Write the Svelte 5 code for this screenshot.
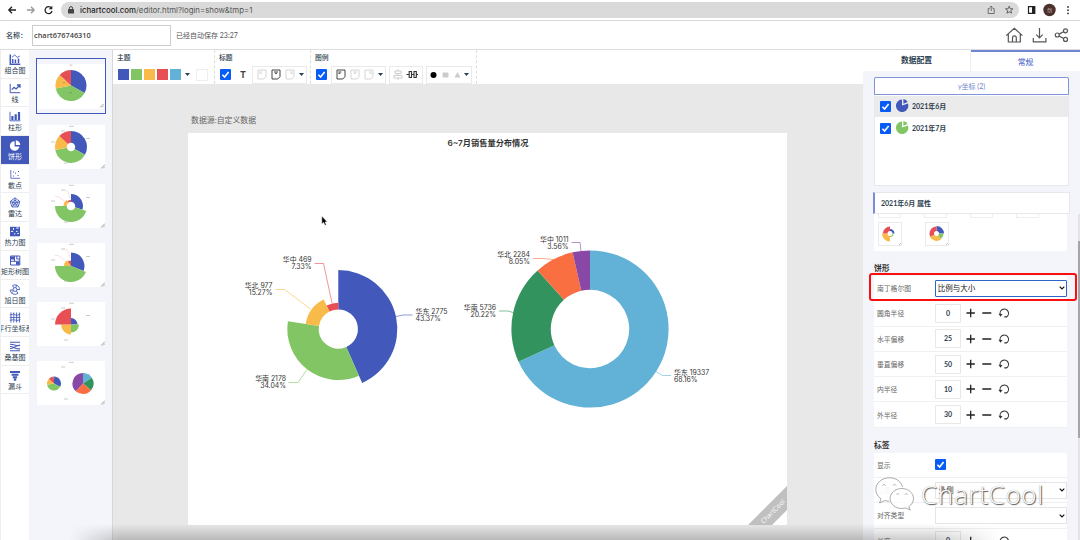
<script>
	const blue = '#4259bb'
	const green = '#82c564'
	const yellow = '#f8bb49'
	const red = '#e84f54'
	const cyan = '#62b1d6'
	const teal = '#32935e'
	const orange = '#fa6f42'
	const purple = '#8948a6'
	const colors = [blue, green, yellow, red]

	const menu = [
		{ icon: 'mix', label: '组合图' },
		{ icon: 'line', label: '线' },
		{ icon: 'bar', label: '柱形' },
		{ icon: 'pie', label: '饼形' },
		{ icon: 'scatter', label: '散点' },
		{ icon: 'radar', label: '雷达' },
		{ icon: 'heat', label: '热力图' },
		{ icon: 'tree', label: '矩形树图' },
		{ icon: 'sun', label: '旭日图' },
		{ icon: 'parallel', label: '平行坐标系' },
		{ icon: 'sankey', label: '桑基图' },
		{ icon: 'funnel', label: '漏斗' }
	]

	function slices(cx, cy, inner, radii, parts, fills) {
		const total = parts.reduce((a, b) => a + b, 0)
		let from = 0
		return parts.map((p, i) => {
			const to = from + (p / total) * Math.PI * 2
			const r = Array.isArray(radii) ? radii[i] : radii
			const at = (radius, a) => `${(cx + radius * Math.sin(a)).toFixed(2)} ${(cy - radius * Math.cos(a)).toFixed(2)}`
			const big = to - from > Math.PI ? 1 : 0
			const d = `M${at(inner, from)}L${at(r, from)}A${r} ${r} 0 ${big} 1 ${at(r, to)}L${at(inner, to)}A${inner} ${inner} 0 ${big} 0 ${at(inner, from)}Z`
			from = to
			return { d, fill: fills[i] }
		})
	}

	const june = slices(338.3, 329, 19.6, [59, 51, 33, 26.3], [43.37, 34.04, 15.27, 7.33], colors)
	const july = slices(590, 329, 39.2, 78.6, [68.16, 20.22, 8.05, 3.56], [cyan, teal, orange, purple])

	const labels = [
		{ name: '华东 2775', pct: '43.37%', x: 415.5, y: 314, color: blue, line: '396,316.5 403,315 412.5,315' },
		{ name: '华南 2178', pct: '34.04%', x: 286, y: 381, end: true, color: green, line: '307,369.5 298,382.5 288.5,382.5' },
		{ name: '华北 977', pct: '15.27%', x: 272.5, y: 288, end: true, color: yellow, line: '310.5,309 284.5,289.5 275.5,289.5' },
		{ name: '华中 469', pct: '7.33%', x: 311.5, y: 262, end: true, color: red, line: '332,303 323.5,263.5 314.5,263.5' },
		{ name: '华东 19337', pct: '68.16%', x: 674, y: 375, color: cyan, line: '656,371.5 662.5,375.5 671,375.5' },
		{ name: '华南 5736', pct: '20.22%', x: 496, y: 310, end: true, color: teal, line: '513,312.5 508,311 499,311' },
		{ name: '华北 2284', pct: '8.05%', x: 530, y: 257, end: true, color: orange, line: '554,259.5 542,258.5 533,258.5' },
		{ name: '华中 1011', pct: '3.56%', x: 568.5, y: 241.5, end: true, color: purple, line: '581,251 580,242.5 571.5,242.5' }
	]

	const parts = [33, 39, 15, 13]
	const thumbs = [
		slices(35, 27, 0, 16, parts, colors),
		slices(34, 22, 4.2, 16, parts, colors),
		slices(34, 22, 4.2, [12, 16, 7.5, 6], [30, 45, 15, 10], colors),
		slices(34, 23, 0, [13.5, 16, 7, 5.5], [31, 44, 15, 10], colors),
		slices(34, 22.5, 0, [6.5, 8, 10, 16], [25, 25, 25, 25], colors),
		[
			...slices(17, 22.5, 0, 7, parts, colors),
			...slices(46, 22.5, 0, 10.5, [16, 20, 26, 38], [cyan, teal, orange, purple])
		]
	]

	const mini = [
		slices(12, 11.5, 2.5, [4.5, 3.5, 8, 7], [25, 25, 25, 25], [blue, green, yellow, red]),
		slices(11.5, 11.5, 2.5, [7.5, 7, 7.5, 7], [25, 14, 28, 33], [blue, green, yellow, red])
	]

	let steps = [
		{ label: '圆角半径', value: 0 },
		{ label: '水平偏移', value: 25 },
		{ label: '垂直偏移', value: 50 },
		{ label: '内半径', value: 10 },
		{ label: '外半径', value: 30 }
	]
</script>

{#snippet check()}
	<svg class="check" viewBox="0 0 11 11"><rect width="11" height="11" rx="1" fill="#075cf5" /><path d="M2.4 5.7l2.2 2.3L8.6 3" fill="none" stroke="#fff" stroke-width="1.6" /></svg>
{/snippet}

{#snippet caret()}
	<svg class="caret" viewBox="0 0 5 3"><path d="M0 0h5L2.5 3z" fill="#2c3e50" /></svg>
{/snippet}

{#snippet page(side, on)}
	<svg class="page" viewBox="0 0 10 11" class:on>
		<path d="M1 1h8v6.700L6.800 10H1z" />
		<path d={side === 'left' ? 'M2.4 3h3M2.4 4.4h2' : side === 'mid' ? 'M3 3h4M4 4.4h2' : 'M4.8 3h3M5.8 4.4h2'} />
	</svg>
{/snippet}

{#snippet chevron()}
	<svg class="chevron" viewBox="0 0 6 4"><path d="M.7.7L3 3 5.3.7" fill="none" stroke="#111" stroke-width="1.2" /></svg>
{/snippet}

{#snippet stepper(s)}
	<div class="row">
		<span class="key">{s.label}</span>
		<span class="num">{s.value}</span>
		<svg class="ops" viewBox="0 0 44 12">
			<path d="M4.7 1.8v8.4M.5 6h8.4M16.3 6h9" stroke="#222" stroke-width="1.3" />
			<path d="M34.6 8.2A4.2 4.2 0 1 1 40.4 9.9H38.3" fill="none" stroke="#333" stroke-width="1.1" />
			<path d="M32.5 6.8l4 .2-2 2.8z" fill="#333" />
		</svg>
	</div>
{/snippet}

<div class="app">
	<div class="browser">
		<svg class="nav" viewBox="0 0 61 20">
			<g fill="none" stroke-width="1.3">
				<path d="M16 10H9M12 6.7L8.8 10l3.2 3.3" stroke="#222" />
				<path d="M27 10h7M31 6.7l3.2 3.3-3.2 3.3" stroke="#999" />
				<path d="M51.4 8A3.5 3.5 0 1 0 52 11" stroke="#222" />
			</g>
			<path d="M52.3 5.7v3.6h-3.6z" fill="#222" />
		</svg>
		<div class="url">
			<svg class="lock" viewBox="0 0 6 8"><rect y="3" width="6" height="4.6" rx=".6" fill="#444" /><path d="M1.4 3.4V2.2a1.6 1.6 0 0 1 3.2 0v1.2" fill="none" stroke="#444" /></svg>
			<span><b>ichartcool.com</b>/editor.html?login=show&amp;tmp=1</span>
			<svg class="urlicons" viewBox="0 0 28 10">
				<path d="M3.8 3.6H2.2v4.9h6V3.6H6.6M5.2 6V1.2M3.7 2.6l1.5-1.5 1.5 1.5" fill="none" stroke="#555" stroke-width=".8" />
				<path d="M23.2 1.2l1 2.5 2.7.2-2.1 1.7.7 2.6-2.3-1.4L20.9 8.2l.7-2.6-2.1-1.7 2.7-.2z" fill="none" stroke="#444" stroke-width=".8" />
			</svg>
		</div>
		<svg class="tools" viewBox="0 0 61 20">
			<path d="M9.5 6.7h6.3v6.6H9.5z" fill="none" stroke="#222" stroke-width="1.2" /><path d="M13 6.5h3v7h-3z" fill="#222" />
			<circle cx="30.5" cy="10" r="6.2" fill="#4c302c" />
			<text x="30.5" y="12" text-anchor="middle" font-size="5" fill="#cbb">剑</text>
			<g fill="#333"><circle cx="49" cy="7" r=".9" /><circle cx="49" cy="10.2" r=".9" /><circle cx="49" cy="13.4" r=".9" /></g>
		</svg>
	</div>

	<header>
		<span class="title">名称：</span>
		<div class="name">chart676746310</div>
		<span class="saved">已经自动保存 23:27</span>
		<svg class="actions" viewBox="0 0 66 18" fill="none" stroke="#555" stroke-width="1.2">
			<path d="M2.200 9.600L10.300 2.200l8.100 7.400M4.300 8v8h12V8M8.500 16v-4.200a1.900 1.900 0 0 1 3.800 0V16" />
			<path d="M35.500 2v9.800M32.300 8.700l3.200 3.200 3.200-3.200M29.300 12v3.800h12.600V12" />
			<circle cx="53.300" cy="9" r="2" /><circle cx="61.500" cy="4.800" r="2" /><circle cx="61.500" cy="13.400" r="2" /><path d="M55.100 8.100l4.500-2.300M55.100 9.900l4.500 2.500" />
		</svg>
	</header>

	<main>
		<nav>
			{#each menu as m}
				<div class="item" class:active={m.icon === 'pie'}>
					<svg viewBox="0 0 12 11" fill="none" stroke="currentColor">
						{#if m.icon === 'mix'}
							<path d="M1.3.5v9.7h10M3.7 9V5M6.4 9V5.500M9.500 9V4.500" stroke-width="1.500" /><path d="M3 3.200L5.700 1l2.500 2.400L10.800 2" stroke-width=".9" />
						{:else if m.icon === 'line'}
							<path d="M1.2.8v8.9h10" /><path d="M2.8 6.6l2.300-2.300 2 1.600 3.400-3.400M8 2h3v2.800" stroke-width="1.300" />
						{:else if m.icon === 'bar'}
							<path d="M1 .8v9h10.400" stroke-width=".9" /><path d="M3.400 9V5M6.700 9V3.200M10 9V1" stroke-width="2.200" />
						{:else if m.icon === 'pie'}
							<path d="M5.600 1.200a4.800 4.800 0 1 0 4.800 5.200H5.600z" fill="currentColor" stroke="none" /><path d="M6.800.3a4.500 4.500 0 0 1 4.400 4.700H6.800z" fill="currentColor" stroke="none" />
						{:else if m.icon === 'scatter'}
							<path d="M1.800 1v8.300H11" stroke-width=".8" /><path d="M4 7h1M6 4.200h1M8.500 6.500h1M9 2.500h1M4 3h1" />
						{:else if m.icon === 'radar'}
							<path d="M6 .8l4.800 3.700L9 9.900H3L1.200 4.500zM6 3l2.800 2.200L7.800 8H4.200l-1-2.800zM6 1v5M1.200 4.500L6 6l4.800-1.500M3 10l3-4 3 4" stroke-width=".9" />
						{:else if m.icon === 'heat'}
							<path d="M1 .8h10v9.500H1z" fill="currentColor" stroke="none" /><path d="M4.500 2v1.800M7.300 2h2.500M2 5.400h2.200M7 5.400h1.500M5 7.800h1.300M8.300 7.500h1.600" stroke="#fff" />
						{:else if m.icon === 'tree'}
							<path d="M1.500 1h9.300v9H1.500zM5.500 1v5.300M1.500 6.300h9.300M7.800 1v3h3" /><path d="M2 1.500h3v3H2zM7 7h3.500v2.800H7z" fill="currentColor" stroke="none" />
						{:else if m.icon === 'sun'}
							<circle cx="6" cy="5.500" r="1.900" stroke-width=".9" /><path d="M1.200 6A4.700 4.700 0 0 0 9 9.200L7.400 7M1.200 6h2.900M3.600 1.500L5 3.800M3.600 1.500a4.700 4.700 0 0 1 7 4M10.700 5.500H8M2.600 8.800l2-1.800M7.500 1l-.6 2.700" stroke-width=".9" />
						{:else if m.icon === 'parallel'}
							<path d="M2 .5v10M4.800.5v10M7.600.5v10M10.400.5v10" stroke-width=".9" /><path d="M.8 3l3.500-1 3.500 1.500L11.400 2M.8 5.500h10.600M.8 8.300l4-.6 3 .8 3.600-.8" stroke-width=".8" />
						{:else if m.icon === 'sankey'}
							<path d="M1 1.300h10M1 3.300c5 0 5 2 10 1.200M1 9.700h10M1 7.800c5-.5 5-3.300 10-3.800M1 5.500c4 0 5 2.600 10 2.400" stroke-width="1.100" />
						{:else}
							<path d="M1 2h10M2.600 4.800h6.800M3.800 7.200h4.400M4.800 9.600h2.400" stroke-width="2.100" />
						{/if}
					</svg>
					<span>{m.label}</span>
				</div>
			{/each}
		</nav>

		<aside class="thumbs">
			{#each thumbs as t, i}
				<div class="thumb" class:selected={i === 0}>
					<svg viewBox={i === 0 ? '0 0 70 55' : '0 0 68 44'}>
						{#each t as s}<path d={s.d} fill={s.fill} />{/each}
						{#if i === 0}
							<path d="M33.5 6h3M40 22.500h3M33 34.500h3M26.500 24h2.500M30 18.500h2" stroke="#555" stroke-opacity=".5" stroke-width=".7" />
							<path d="M65 49.500l3.500-3.500M67 49.500l1.500-1.500" stroke="#888" stroke-width=".8" />
						{:else}
							<path d="M32 1.300h5M49 13.500h4M14 17h4M27 38h4M24 6h4" stroke="#aaa" stroke-width=".6" />
							<path d="M64 43.500l4-4M66 43.500l2-2" stroke="#888" stroke-width=".8" />
							{#if i === 2 || i === 3}<path d="M28 6.500l3 1.500 2 7M18 12.500h3l7 5" fill="none" stroke="#f3b5ae" stroke-width=".4" />{/if}
						{/if}
					</svg>
				</div>
			{/each}
		</aside>

		<section class="work">
			<div class="toolbar">
				<div class="group theme">
					<h4>主题</h4>
					<div class="controls">
						{#each [...colors, cyan] as c}<i class="swatch" style="background: {c}"></i>{/each}
						{@render caret()}
						<i class="blank"></i>
					</div>
				</div>
				<div class="group heading">
					<h4>标题</h4>
					<div class="controls">
						{@render check()}
						<b class="tee">T</b>
						<div class="box wide">{@render page('left')}{@render page('mid', true)}{@render page('right')}{@render caret()}</div>
					</div>
				</div>
				<div class="group legend">
					<h4>图例</h4>
					<div class="controls">
						{@render check()}
						<div class="box wide lead">{@render page('left', true)}{@render page('mid')}{@render page('right')}{@render caret()}</div>
						<div class="box">
							<svg class="align" viewBox="0 0 26 11" fill="none">
								<path d="M5 0v2M5 4.500v2M5 9v2M2 2h6v2.500H2zM1 6.500h8V9H1z" stroke="#ccc" />
								<path d="M13.500 5.500h2.500M19 5.500h2M23.500 5.500h1.500M16.200 2.500h2.300v6h-2.300zM21 2.500h2.300v6H21z" stroke="#333" stroke-width="1.100" />
							</svg>
						</div>
						<div class="box shapes">
							<svg class="marks" viewBox="0 0 30 8"><circle cx="3.500" cy="4" r="3" fill="#000" /><rect x="12.500" y="1.500" width="6" height="5" rx="1" fill="#ccc" /><path d="M27.500 1l3 5.500h-6z" fill="#ccc" /></svg>
							{@render caret()}
						</div>
					</div>
				</div>
			</div>
			<p class="source">数据源:自定义数据</p>
			<div class="canvas">
				<svg viewBox="188 133 599 392">
					<text class="chart-title" x="488" y="145.800" text-anchor="middle" textLength="81">6~7月销售量分布情况</text>
					{#each [...june, ...july] as s}<path d={s.d} fill={s.fill} />{/each}
					{#each labels as l}
						<polyline points={l.line} fill="none" stroke={l.color} stroke-opacity=".75" stroke-width=".8" />
						<text x={l.x} y={l.y} text-anchor={l.end ? 'end' : 'start'}>{l.name}</text>
						<text x={l.x} y={l.y + 7} text-anchor={l.end ? 'end' : 'start'}>{l.pct}</text>
					{/each}
					<path d="M787 486v24l-15 15h-24z" fill="#c0c0c0" />
					<text class="ribbon" transform="translate(763.500 524) rotate(-45)" textLength="31">ChartCool</text>
					<path d="M321.800 216v8l1.800-1.600 1.300 2.900 1.400-.6-1.300-2.800h2.300z" fill="#000" stroke="#fff" stroke-width=".5" />
				</svg>
			</div>
		</section>

		<aside class="panel">
			<div class="tabs"><span>数据配置</span><span class="current">常规</span></div>
			<div class="list">
				<div class="axis">y坐标 (2)</div>
				{#each [['2021年6月', blue], ['2021年7月', green]] as [label, color], i}
					<div class="series" class:picked={i === 0}>
						{@render check()}
						<svg class="slice" viewBox="0 0 13 13"><path d="M6 .6v5.900l5.900-2A6.200 6.200 0 1 1 6 .6z" fill={color} /><path d="M7.400.1a5.700 5.700 0 0 1 4.300 3L7.400 4.800z" fill={color} /></svg>
						<b>{label}</b>
					</div>
				{/each}
			</div>
			<div class="props">2021年6月 属性</div>
			<div class="variants">
				<div class="cut"><i></i><i></i><i></i><i></i></div>
				<div class="minis">
					{#each mini as t}
						<svg viewBox="0 0 24 24"><rect x=".5" y=".5" width="23" height="23" fill="#fff" stroke="#eaeaea" />{#each t as s}<path d={s.d} fill={s.fill} />{/each}<path d="M21 23l2-2" stroke="#aaa" stroke-width=".7" /></svg>
					{/each}
				</div>
			</div>
			<h3>饼形</h3>
			<div class="row">
				<span class="key">南丁格尔图</span>
				<div class="select focus">比例与大小{@render chevron()}</div>
				<div class="highlight"></div>
			</div>
			{#each steps as s}{@render stepper(s)}{/each}
			<h3 class="second">标签</h3>
			<div class="row"><span class="key">显示</span>{@render check()}</div>
			<div class="row"><span class="key faint">位置</span><div class="select">外侧{@render chevron()}</div></div>
			<div class="row"><span class="key">对齐类型</span><div class="select">{@render chevron()}</div></div>
			{@render stepper({ label: '长度', value: 0 })}
			<div class="track"><i></i></div>
		</aside>
	</main>

	<div class="dock"></div>
	<div class="watermark">
		<svg viewBox="0 0 40 34" fill="#fff" fill-opacity=".75" stroke="#888" stroke-width=".7">
			<path d="M27.500 10C26 4 20.500.8 14.500.8 6.700.8.800 6 .800 12.500c0 4 2 7 5.200 9.300l-1.400 4.200 5-2.500c1.700.5 3 .7 4.900.7" />
			<path d="M38.500 21.500c0-5.500-5.200-10-11.700-10s-11.700 4.500-11.700 10 5.200 10 11.700 10c1.300 0 2.800-.2 4-.6l4.500 2.200-1.500-3.500c2.900-2 4.700-4.900 4.700-8.100z" />
			<g fill="none"><path d="M7.500 8.500a1.700 1.700 0 0 1 3 0M18 8.500a1.700 1.700 0 0 1 3 0M21.500 17.500a1.500 1.500 0 0 1 2.600 0M30 17.500a1.500 1.500 0 0 1 2.600 0" /></g>
		</svg>
		<span>ChartCool</span>
	</div>
</div>

<style>
	:global(body) {
		margin: 0;
		overflow: hidden;
	}

	.app {
		background: #fff;
		color: #2c3e50;
		display: flex;
		flex-direction: column;
		font-family: Lato, "Noto Sans CJK SC", sans-serif;
		font-size: 7px;
		height: 540px;
		line-height: 1.2;
		overflow: hidden;
		position: relative;
		width: 1080px;
	}

	svg {
		display: block;
		flex: none;
	}

	.browser {
		border-bottom: 1px solid #d8d8d8;
		display: flex;
		flex: none;
		height: 20px;
	}

	.nav, .tools {
		height: 20px;
		width: 61px;
	}

	.url {
		align-items: center;
		background: #dadada;
		border-radius: 8px;
		box-sizing: border-box;
		color: #555;
		display: flex;
		font: 7.85px Inter, sans-serif;
		height: 16px;
		margin-top: 2px;
		padding: 0 5px 0 7px;
		width: 958px;
	}

		.url b {
			color: #222;
			font-weight: 500;
		}

	.lock {
		height: 8px;
		margin-right: 6px;
		width: 6px;
	}

	.urlicons {
		height: 10px;
		margin-left: auto;
		width: 28px;
	}

	header {
		align-items: center;
		border-bottom: 1px solid #ddd;
		box-sizing: border-box;
		display: flex;
		flex: none;
		height: 29px;
		padding: 0 10px 0 6px;
	}

	.title {
		font-weight: 500;
		width: 26px;
	}

	.name {
		border: 1px solid #ccc;
		box-sizing: border-box;
		color: #444;
		font: 600 7.4px "Open Sans", sans-serif;
		height: 21px;
		line-height: 18px;
		padding-left: 1px;
		width: 139px;
	}

	.saved {
		color: #555;
		margin-left: 5px;
	}

	.actions {
		height: 18px;
		margin-left: auto;
		width: 66px;
	}

	main {
		display: flex;
		flex: 1;
		min-height: 0;
	}

	nav {
		background: #fff;
		border-left: 1px solid #eee;
		box-sizing: border-box;
		flex: none;
		overflow: hidden;
		width: 29px;
	}

	.item {
		align-items: center;
		border-bottom: 1px solid #eee;
		box-sizing: border-box;
		display: flex;
		flex-direction: column;
		height: 28.7px;
		padding-top: 4px;
	}

		.item svg {
			color: #4259bb;
			height: 11px;
			width: 12px;
		}

		.item span {
			line-height: 10px;
			white-space: nowrap;
		}

		.item.active {
			background: #4259bb;
			color: #fff;
		}

		.item.active svg {
			color: #fff;
		}

	.thumbs {
		background: #f3f5fa;
		border-right: 1px solid #d5d7dc;
		box-sizing: border-box;
		display: flex;
		flex: none;
		flex-direction: column;
		gap: 15px;
		padding: 75px 0 0 8px;
		width: 84px;
	}

	.thumb {
		background: #fff;
		height: 44px;
		width: 68px;
	}

		.thumb svg {
			height: 100%;
			width: 100%;
		}

		.thumb.selected {
			background: linear-gradient(#f3f5fa 5px, #fff 5px, #fff 50px, #f3f5fa 50px);
			border: 1px solid #4259bb;
			box-sizing: border-box;
			height: 56px;
			margin: -67px 0 -4px -1px;
			width: 70px;
		}

	.work {
		background: #e8e8e8;
		display: flex;
		flex: none;
		flex-direction: column;
		width: 750px;
	}

	.toolbar {
		background: #fff;
		display: flex;
		flex: none;
		height: 34px;
	}

	.group {
		border-right: 1px dashed #ddd;
		box-sizing: border-box;
		padding: 3px 0 0 4px;
	}

	.theme { width: 102px; }
	.heading { width: 96px; }
	.legend { width: 166px; }

	h4 {
		font-size: 6.8px;
		font-weight: 500;
		line-height: 9px;
		margin: 0;
	}

	.controls {
		align-items: center;
		display: flex;
		height: 19px;
		margin-top: 3px;
	}

	.swatch {
		height: 11px;
		margin-right: 2px;
		width: 11px;
	}

		.swatch:first-child {
			margin-left: 1px;
		}

	.caret {
		height: 3px;
		width: 5px;
	}

	.swatch + .caret {
		margin-left: 2px;
	}

	.blank {
		border: 1px solid #eee;
		height: 10px;
		margin-left: 6px;
		width: 10px;
	}

	.check {
		height: 11px;
		margin-left: 1px;
		width: 11px;
	}

	.tee {
		color: #444;
		font: 700 9px Inter, sans-serif;
		margin: 0 6px 0 9px;
		width: 7px;
	}

	.box {
		align-items: center;
		border: 1px solid #eaeaea;
		box-sizing: border-box;
		display: flex;
		height: 18px;
		margin-right: 3px;
		padding: 0 3px;
		width: 34px;
	}

		.box.wide {
			gap: 4px;
			padding-left: 4px;
			width: 55px;
		}

		.box.lead {
			margin-left: 4px;
		}

		.box.shapes {
			gap: 4px;
			width: 46px;
		}

	.page {
		fill: none;
		height: 11px;
		stroke: #d5d5d5;
		stroke-width: 1;
		width: 10px;
	}

		.page.on {
			stroke: #444;
		}

	.align {
		height: 11px;
		width: 26px;
	}

	.marks {
		height: 8px;
		overflow: visible;
		width: 30px;
	}

	.source {
		color: #666;
		font-size: 7.9px;
		line-height: 12px;
		margin: 30px 0 7px 78px;
	}

	.canvas {
		background: #fff;
		height: 392px;
		margin-left: 75px;
		width: 599px;
	}

		.canvas svg {
			height: 392px;
			width: 599px;
		}

		.canvas text {
			fill: #333;
			font: 6.9px Inter, "Noto Sans CJK SC", sans-serif;
		}

		.canvas .chart-title {
			font-size: 8.2px;
			font-weight: 600;
		}

		.canvas .ribbon {
			fill: #fff;
			font: 6.6px "Open Sans", sans-serif;
		}

	.panel {
		background: #f3f5fa;
		box-sizing: border-box;
		flex: none;
		overflow: hidden;
		padding-left: 11px;
		position: relative;
		width: 217px;
	}

	.tabs {
		background: #fff;
		display: flex;
		height: 21px;
		margin-left: -11px;
	}

		.tabs span {
			border-right: 1px solid #eee;
			box-sizing: border-box;
			font-size: 7.8px;
			font-weight: 700;
			line-height: 21px;
			text-align: center;
			width: 108px;
		}

		.tabs .current {
			border-right: 0;
			border-top: 2px solid #7085d3;
			color: #6379ce;
			font-weight: 500;
			width: 109px;
		}

	.list {
		background: #fff;
		border: 1px solid #e8e8ec;
		box-sizing: border-box;
		height: 109px;
		margin-top: 6px;
		width: 195px;
	}

	.axis {
		border: 1px solid #7f94da;
		border-radius: 2px 2px 0 0;
		box-sizing: border-box;
		color: #7083cf;
		height: 18px;
		line-height: 16px;
		margin: -1px -1px 1px;
		text-align: center;
	}

	.series {
		align-items: center;
		display: flex;
		height: 22px;
		padding-left: 4px;
	}

		.series.picked {
			background: #ebebeb;
			height: 21px;
		}

	.slice {
		height: 13px;
		margin: -2px 3px 0 5px;
		width: 13px;
	}

	.props {
		background: #fff;
		border: 1px solid #e8e8ec;
		border-left: 2px solid #7c8cd4;
		box-sizing: border-box;
		font-weight: 700;
		height: 22px;
		line-height: 20px;
		margin: 6px 0 0 -1px;
		padding-left: 6px;
		width: 197px;
	}

	.variants {
		background: #fff;
		box-sizing: border-box;
		height: 37px;
		padding-left: 4px;
		width: 193px;
	}

	.cut {
		display: flex;
		gap: 23px;
		padding-bottom: 4px;
	}

		.cut i {
			border: 1px solid #eee;
			border-top: 0;
			box-sizing: border-box;
			height: 4px;
			width: 23px;
		}

	.minis {
		display: flex;
		gap: 23px;
	}

		.minis svg {
			height: 24px;
			width: 24px;
		}

	h3 {
		color: #333;
		font-size: 7.8px;
		font-weight: 700;
		line-height: 12px;
		margin: 11px 0 2px;
	}

		h3.second {
			margin-top: 11px;
		}

	.row {
		align-items: center;
		background: #fff;
		border-bottom: 1px solid #f0f0f2;
		box-sizing: border-box;
		display: flex;
		height: 25.3px;
		padding-left: 3px;
		position: relative;
		width: 193px;
	}

	.key {
		color: #666;
		font-size: 6.8px;
		width: 58px;
	}

		.key.faint {
			color: #ddd;
		}

	.row .check {
		margin-left: 0;
	}

	.num {
		border: 1px solid #e8e8e8;
		box-sizing: border-box;
		font-weight: 700;
		height: 19px;
		line-height: 17px;
		text-align: center;
		width: 26px;
	}

	.ops {
		height: 12px;
		margin-left: 5px;
		width: 44px;
	}

	.select {
		align-items: center;
		border: 1px solid #e5e5e5;
		box-sizing: border-box;
		color: #333;
		display: flex;
		font-size: 7.5px;
		height: 17px;
		padding: 0 1px 0 3px;
		width: 133px;
	}

		.select.focus {
			border: 1.5px solid #2c64c8;
			border-radius: 1px;
			color: #111;
			padding-left: 2px;
		}

	.chevron {
		height: 4px;
		margin-left: auto;
		width: 6px;
	}

	.highlight {
		border: 2px solid #f80f0f;
		border-radius: 3px;
		height: 24px;
		left: -5px;
		position: absolute;
		top: -3px;
		width: 204px;
		z-index: 2;
	}

	.track {
		background: #e4e4e6;
		bottom: 0;
		position: absolute;
		right: 0;
		top: 164px;
		width: 2px;
	}

		.track i {
			background: #a6a6aa;
			display: block;
			height: 197px;
			margin-top: 27px;
		}

	/* shadow cast by the desktop dock */
	.dock {
		background: linear-gradient(transparent, rgba(0, 0, 0, .2));
		bottom: 0;
		height: 16px;
		left: 0;
		-webkit-mask-image: linear-gradient(90deg, transparent 70px, #000 120px, #000 930px, transparent 1000px);
		mask-image: linear-gradient(90deg, transparent 70px, #000 120px, #000 930px, transparent 1000px);
		position: absolute;
		width: 1080px;
	}

	.watermark {
		align-items: center;
		color: #fff;
		display: flex;
		font: 300 26px "Open Sans", sans-serif;
		left: 875px;
		letter-spacing: .7px;
		position: absolute;
		text-shadow: 1px 1px 1px #555, 0 0 1px #999;
		top: 476px;
	}

		.watermark svg {
			height: 34px;
			margin-right: 6px;
			width: 40px;
		}
</style>
